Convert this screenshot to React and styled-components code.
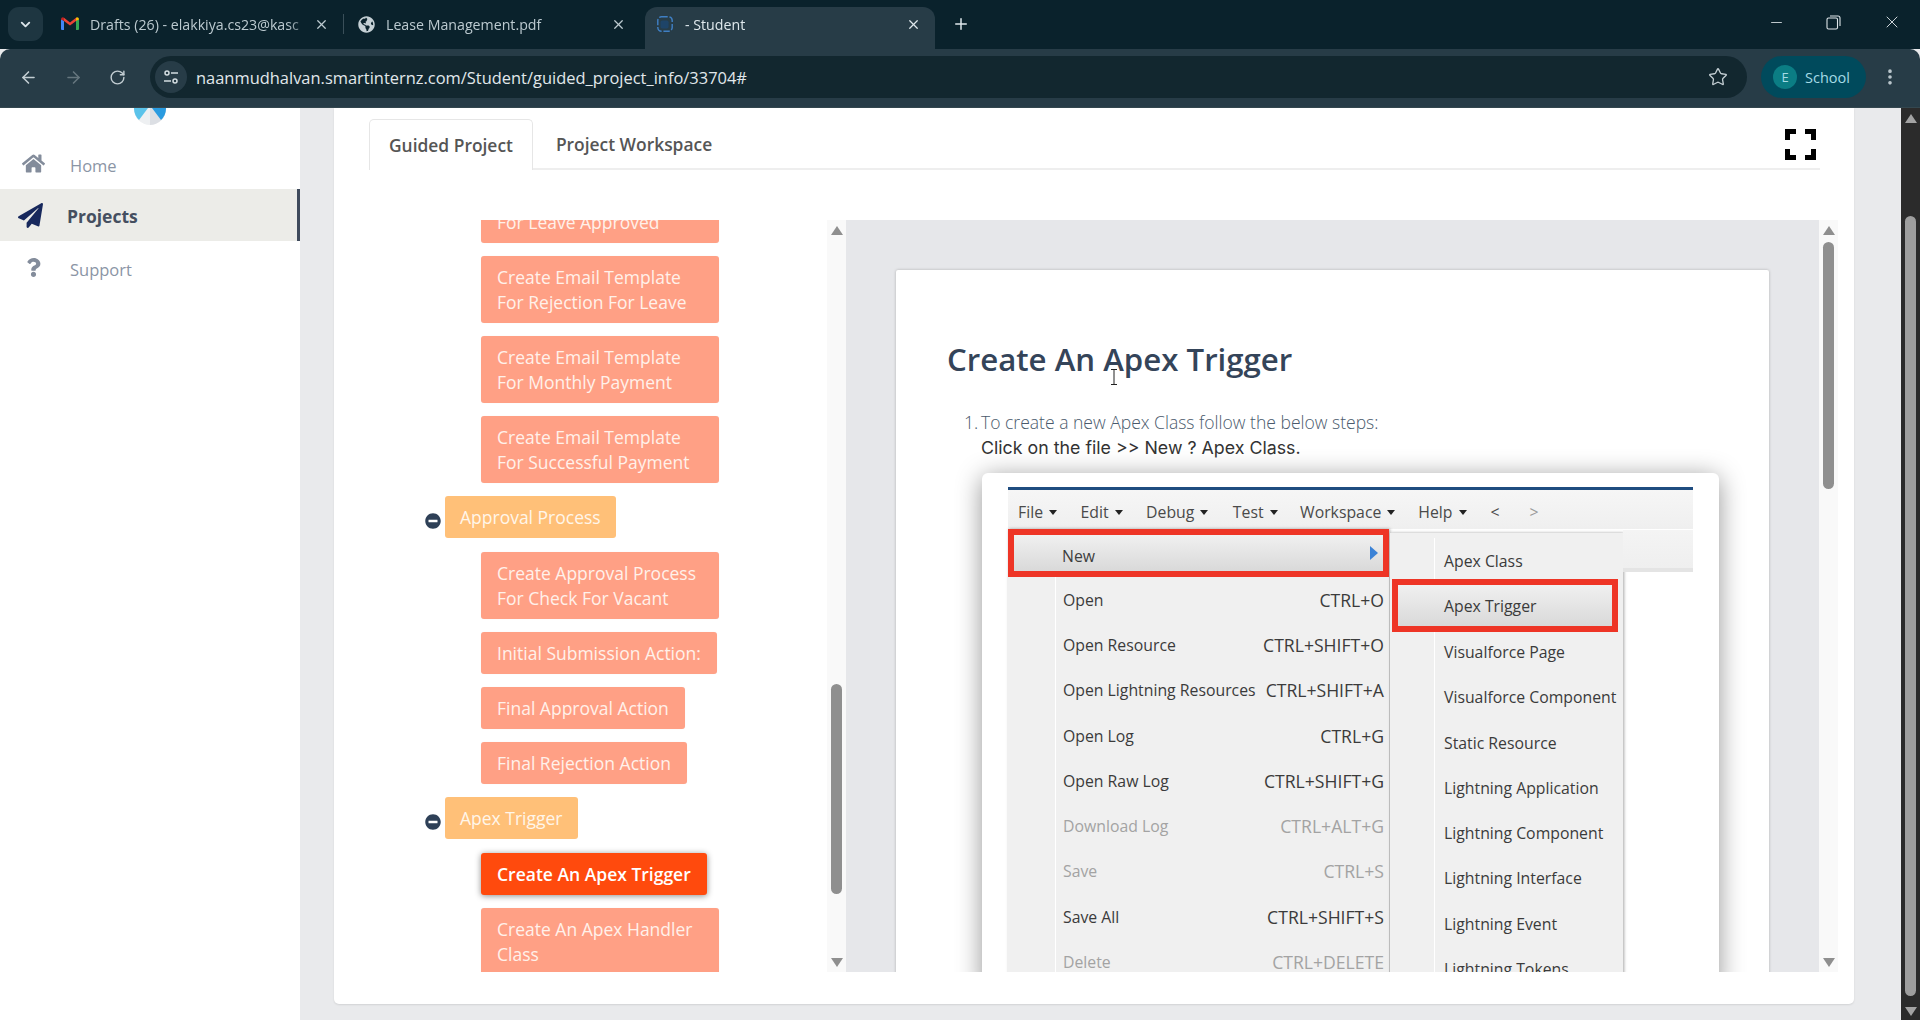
import React from "react";
import styled, { createGlobalStyle } from "styled-components";
import { ArrowLeft, ArrowRight, RotateCw, Star, Plus, X, Minus, ChevronDown, EllipsisVertical } from "lucide-react";
import { FaHome, FaPaperPlane, FaQuestion, FaMinusCircle, FaGlobeAmericas } from "react-icons/fa";

const Global = createGlobalStyle`
  html, body { margin: 0; padding: 0; height: 100%; overflow: hidden; background: #e9eaec; }
  * { box-sizing: border-box; }
  body { font-family: "Open Sans", "Noto Sans", sans-serif; }
`;

const Shell = styled.div`display: flex; flex-direction: column; width: 1920px; height: 1020px; overflow: hidden;`;

const TabStrip = styled.div`display: flex; align-items: flex-end; height: 49px; background: #0a222c; padding-left: 8px; color: #c6d2d8; font: 14.2px "Open Sans", sans-serif;`;
const TabSearch = styled.div`display: flex; align-items: center; justify-content: center; width: 35px; height: 34px; margin-bottom: 8px; border-radius: 11px; background: #1e3641; color: #dbe5ea;`;
const Tab = styled.div`
  display: flex; align-items: center; height: 42px; width: ${p => p.$w}px; margin-left: ${p => p.$ml || 0}px;
  padding: 0 14px 8px ${p => p.$pl || 18}px; border-radius: 12px 12px 0 0; white-space: nowrap;
  background: ${p => (p.$active ? "#273c47" : "transparent")}; color: ${p => (p.$active ? "#dfe8ec" : "#bccad0")};
`;
const TabFav = styled.span`display: flex; width: 18px; height: 18px; margin-right: 11px; flex: none; align-items: center; justify-content: center;`;
const TabTitle = styled.span`flex: 1; overflow: hidden; white-space: nowrap; -webkit-mask-image: linear-gradient(90deg, #000 88%, transparent);`;
const TabSep = styled.span`width: 1px; height: 20px; margin: 0 0 15px 0; background: #3a4f59;`;
const NewTab = styled.div`display: flex; align-items: center; height: 42px; padding-bottom: 8px; margin-left: 17px; color: #dfe8ec;`;
const WindowControls = styled.div`display: flex; align-items: center; margin-left: auto; height: 49px; padding: 0 18px 5px 0; gap: 41px; color: #dfe6ea;`;
const RestoreIcon = styled.svg`display: block;`;

const Toolbar = styled.div`display: flex; align-items: center; height: 59px; background: #273c47; border-radius: 10px 10px 0 0; padding: 0 0 2px 19px; color: #b9c6cc; border-bottom: 1px solid #34474f;`;
const NavButton = styled.span`display: flex; width: ${p => p.$w || 45}px; color: ${p => (p.$dim ? "#65767e" : "#c3ced3")};`;
const Omnibox = styled.div`display: flex; align-items: center; width: 1597px; height: 42px; margin-left: -9px; border-radius: 21px; background: #12272f; padding: 0 19px 0 5px; color: #e1e8eb; font: 16.45px "Open Sans", sans-serif;`;
const TuneBadge = styled.span`display: flex; align-items: center; justify-content: center; width: 32px; height: 32px; border-radius: 50%; background: #273c47; margin-right: 9px;`;
const Url = styled.span`flex: 1; white-space: nowrap;`;
const ProfilePill = styled.div`display: flex; align-items: center; height: 42px; width: 105px; margin-left: 14px; padding-left: 12px; border-radius: 21px; background: #004a5c; color: #a5dbe6; font: 14.5px "Open Sans", sans-serif;`;
const Avatar = styled.span`display: flex; align-items: center; justify-content: center; width: 24px; height: 24px; margin-right: 8px; border-radius: 50%; background: #0b7d84; font-size: 13px;`;
const MenuDots = styled.span`display: flex; margin-left: 14px; color: #bcc8ce;`;

const Viewport = styled.div`display: flex; flex: 1; min-height: 0;`;
const Sidebar = styled.nav`width: 300px; flex: none; background: #fff;`;
const LogoArc = styled.svg`display: block; margin: 0 auto 16px;`;
const NavItem = styled.div`
  display: flex; align-items: center; height: ${p => p.$h}px;
  background: ${p => (p.$active ? "#ecece8" : "transparent")};
  border-right: 3px solid ${p => (p.$active ? "#3f4a5c" : "transparent")};
  color: ${p => (p.$active ? "#454f60" : "#8b95a5")};
  font: ${p => (p.$active ? "700 17.5px" : "400 16.5px")} "Open Sans", sans-serif;
`;
const NavIcon = styled.span`display: flex; justify-content: center; width: ${p => p.$w}px; margin: 0 0 ${p => p.$mb || 0}px ${p => p.$ml}px; color: ${p => p.$c || "#838c9b"};`;
const NavLabel = styled.span`margin-left: ${p => p.$ml}px; padding: ${p => p.$pt || 0}px 0 ${p => p.$pb || 0}px;`;

const Main = styled.main`flex: 1; min-width: 0; padding-left: 34px; background: #e9eaec;`;
const Card = styled.section`width: 1520px; height: 896px; padding: 11px 34px 0 35px; background: #fff; border-radius: 0 0 5px 5px; box-shadow: 0 1px 2px rgba(0,0,0,.1);`;
const TabsRow = styled.div`display: flex; align-items: stretch; height: 51px; border-bottom: 2px solid #eeeeee;`;
const PageTab = styled.div`
  display: flex; align-items: center; padding: 0 ${p => (p.$active ? 19 : 22)}px; margin-bottom: ${p => (p.$active ? -2 : 0)}px; color: #555;
  font: 600 17.4px "Open Sans", sans-serif; background: #fff;
  border: 1px solid ${p => (p.$active ? "#e6e6e6" : "transparent")}; border-bottom: 0; border-radius: 5px 5px 0 0;
`;
const FullscreenBtn = styled.svg`display: block; margin: 10px 4px 0 auto;`;

const Body = styled.div`display: flex; height: 752px; margin-top: 50px;`;
const TreePanel = styled.div`display: flex; width: 477px; flex: none; height: 100%;`;
const TreeClip = styled.div`flex: 1; height: 100%; overflow: hidden;`;
const TreeList = styled.div`display: flex; flex-direction: column; margin-top: -57px;`;
const ParentRow = styled.div`display: flex; align-items: center; gap: 4px; padding-left: 56px; margin-top: 13px;`;
const MinusWrap = styled.span`display: flex; margin-top: 8px; color: #2e4057;`;
const Parent = styled.div`padding: 8.5px 15px; line-height: 25px; font-size: 17.5px; color: #fff6ea; background: #ffc078; border-radius: 3px;`;
const Child = styled.div`
  align-self: flex-start; max-width: 238px; margin: ${p => (p.$first ? 14 : 13)}px 0 0 112px; padding: 8.5px 16px; line-height: 25px; font-size: 17.5px; border-radius: 3px;
  color: ${p => (p.$current ? "#fff" : "#fff1ea")}; font-weight: ${p => (p.$current ? 600 : 400)};
  background: ${p => (p.$current ? "#ff4a0d" : "#ffa085")};
  min-width: ${p => (p.$wide ? "238px" : "0")};
  box-shadow: ${p => (p.$current ? "0 1px 6px rgba(0,0,0,.45)" : "0 0 1px rgba(0,0,0,.08)")};
`;

const Track = styled.div`display: flex; flex-direction: column; align-items: center; width: 19px; flex: none; height: 100%; padding: 6px 4px 5px; background: #f9f9f9;`;
const ArrowUp = styled.span`width: 0; height: 0; border: 6px solid transparent; border-top: 0; border-bottom: 9px solid ${p => p.$c || "#8f8f8f"}; flex: none;`;
const ArrowDown = styled.span`width: 0; height: 0; border: 6px solid transparent; border-bottom: 0; border-top: 9px solid ${p => p.$c || "#8f8f8f"}; flex: none;`;
const Thumb = styled.span`width: 100%; flex: none; height: ${p => p.$h}px; margin: ${p => p.$t}px 0 auto; border-radius: 6px; background: ${p => p.$c || "#8f8f8f"};`;

const DocPanel = styled.div`width: 973px; flex: none; height: 100%; overflow: hidden; padding: 50px 0 0 50px; background: #e6e7ea;`;
const DocPage = styled.article`position: relative; width: 873px; min-height: 800px; padding: 69px 0 0 51px; background: #fff; border-radius: 2px; box-shadow: 0 0 3px rgba(0,0,0,.25);`;
const DocTitle = styled.h1`margin: 0; font: 600 31.2px/40px "Open Sans", sans-serif; color: #344459;`;
const StepLine = styled.div`display: flex; margin: ${p => p.$mt}px 0 0 17px; height: 26px; line-height: 26px; font-size: 17.55px; font-weight: 300; color: #4a5a6c;`;
const StepNum = styled.span`width: 17px;`;
const StepSub = styled.div`margin-left: 34px; height: 26px; font: 400 17.8px/26px "Inter", "Lato", sans-serif; color: #333;`;
const Cursor = styled.svg`position: absolute; left: 214px; top: 99px;`;

const Figure = styled.div`width: 737px; height: 520px; margin: 12px 0 0 35px; padding: 14px 26px 0; background: #fff; border-radius: 6px; box-shadow: 0 4px 26px rgba(0,0,0,.42);`;
const AppFrame = styled.div`border-top: 3px solid #1f4d80; font: 15.8px "Open Sans", sans-serif; color: #3e3e3e;`;
const MenuBar = styled.div`display: flex; align-items: center; height: 39px; padding: 5px 0 0 10px; background: linear-gradient(#f6f6f6, #efefef);`;
const MenuTitle = styled.span`display: inline-flex; align-items: center; margin-right: ${p => p.$mr}px; color: ${p => p.$dim ? "#9a9a9a" : "#4a4a4a"};`;
const Caret = styled.span`width: 0; height: 0; margin-left: 6px; border: 4px solid transparent; border-bottom: 0; border-top: 5px solid #222;`;
const Menus = styled.div`display: flex; align-items: flex-start;`;
const FileMenu = styled.div`width: 381px; flex: none; background: #f0f0f0; box-shadow: 1px 0 3px rgba(0,0,0,.35);`;
const SubMenu = styled.div`width: 233px; flex: none; margin: 4px 0 0 1px; padding-top: 5px; background: #f0f0f0; box-shadow: 1px 0 3px rgba(0,0,0,.35);`;
const BackBand = styled.div`flex: 1; height: 42px; background: linear-gradient(#f4f4f4, #efefef); border-bottom: 4px solid #e4e4e4; margin-top: 1px;`;
const FileRow = styled.div`
  display: flex; align-items: center; justify-content: space-between; height: 45.3px; padding: 0 5px 0 7px; margin-left: 47px; border-left: 1px solid #fff;
  white-space: nowrap; color: ${p => (p.$off ? "#a3a3a3" : "#3b3b3b")};
`;
const Shortcut = styled.span`font-size: 17.6px;`;
const SubRow = styled.div`display: flex; align-items: center; height: 45.3px; margin-left: 44px; padding-left: 9px; border-left: 1px solid #fff; white-space: nowrap; color: #3b3b3b;`;
const RedNew = styled.div`display: flex; align-items: center; justify-content: space-between; height: 48px; padding: 5px 5px 0 48px; border: 6px solid #ee3526; background: linear-gradient(#f0f0f0, #d9d9d9);`;
const NewArrow = styled.span`width: 0; height: 0; margin-top: -6px; border: 7px solid transparent; border-right: 0; border-left: 8px solid #3b82d6;`;
const RedTrigger = styled.div`position: relative; z-index: 1; display: flex; align-items: center; height: 53px; margin: -4px 5px -3px 2px; padding-left: 46px; border: 6px solid #ee3526; background: linear-gradient(#f0f0f0, #d9d9d9); color: #3b3b3b;`;

const PageBar = styled.aside`display: flex; flex-direction: column; align-items: center; width: 19px; flex: none; padding: 6px 4px 4px; background: #2b2b2b;`;

const tree = [
  { t: "Create Email Template For Leave Approved", w: 1 },
  { t: "Create Email Template For Rejection For Leave", w: 1 },
  { t: "Create Email Template For Monthly Payment", w: 1 },
  { t: "Create Email Template For Successful Payment", w: 1 },
  { p: "Approval Process" },
  { t: "Create Approval Process For Check For Vacant", w: 1, first: 1 },
  { t: "Initial Submission Action:" },
  { t: "Final Approval Action" },
  { t: "Final Rejection Action" },
  { p: "Apex Trigger" },
  { t: "Create An Apex Trigger", cur: 1, first: 1 },
  { t: "Create An Apex Handler Class", w: 1 },
];
const fileRows = [
  ["Open", "CTRL+O"], ["Open Resource", "CTRL+SHIFT+O"], ["Open Lightning Resources", "CTRL+SHIFT+A"], ["Open Log", "CTRL+G"],
  ["Open Raw Log", "CTRL+SHIFT+G"], ["Download Log", "CTRL+ALT+G", 1], ["Save", "CTRL+S", 1], ["Save All", "CTRL+SHIFT+S"], ["Delete", "CTRL+DELETE", 1],
];
const subRows = ["Visualforce Page", "Visualforce Component", "Static Resource", "Lightning Application", "Lightning Component", "Lightning Interface", "Lightning Event", "Lightning Tokens"];
const menus = [["File", 23.5], ["Edit", 23.5], ["Debug", 24.5], ["Test", 22.5], ["Workspace", 23], ["Help", 24]];

const Gmail = () => (
  <svg width="18" height="14" viewBox="0 0 18 14">
    <path d="M0 13V2l3 2v9H1a1 1 0 0 1-1-1z" fill="#4285f4" />
    <path d="M18 13V2l-3 2v9h2a1 1 0 0 0 1-1z" fill="#34a853" />
    <path d="M3 4V.8L9 5.5 15 .8V4L9 8.5z" fill="#ea4335" />
    <path d="M0 2.4C0 .6 2 -.4 3 .8V4z" fill="#c5221f" />
    <path d="M18 2.4C18 .6 16 -.4 15 .8V4z" fill="#fbbc04" />
  </svg>
);
const StudentFav = () => (
  <svg width="20" height="20" viewBox="0 0 20 20" fill="none">
    <rect x="2" y="2" width="16" height="16" rx="4" stroke="#3f7fc4" strokeWidth="1.6" strokeDasharray="7 2" />
    <rect x="5" y="6" width="9" height="9" rx="2" fill="#1e4468" />
  </svg>
);

export default function App() {
  return (
    <Shell>
      <Global />
      <TabStrip>
        <TabSearch><ChevronDown size={15} strokeWidth={3} /></TabSearch>
        <Tab $w={300} $pl={18}>
          <TabFav><Gmail /></TabFav>
          <TabTitle>Drafts (26) - elakkiya.cs23@kasc</TabTitle>
          <X size={15} strokeWidth={2} />
        </Tab>
        <TabSep />
        <Tab $w={296} $pl={13}>
          <TabFav><FaGlobeAmericas size={17} color="#c5d0d5" /></TabFav>
          <TabTitle>Lease Management.pdf</TabTitle>
          <X size={15} strokeWidth={2} />
        </Tab>
        <Tab $w={290} $active $ml={5} $pl={11}>
          <TabFav><StudentFav /></TabFav>
          <TabTitle>- Student</TabTitle>
          <X size={15} strokeWidth={2} />
        </Tab>
        <NewTab><Plus size={18} strokeWidth={2} /></NewTab>
        <WindowControls>
          <Minus size={17} strokeWidth={1.2} />
          <RestoreIcon width="15" height="15" viewBox="0 0 15 15" fill="none" stroke="currentColor" strokeWidth="1.1">
            <rect x="1" y="3" width="10.5" height="11" rx="1.5" />
            <path d="M4 1h8a2 2 0 0 1 2 2v8" />
          </RestoreIcon>
          <X size={20} strokeWidth={1.1} />
        </WindowControls>
      </TabStrip>
      <Toolbar>
        <NavButton><ArrowLeft size={19} /></NavButton>
        <NavButton $dim><ArrowRight size={19} /></NavButton>
        <NavButton $w={50}><RotateCw size={17} /></NavButton>
        <Omnibox>
          <TuneBadge>
            <svg width="16" height="16" viewBox="0 0 16 16" fill="none" stroke="#d5dee2" strokeWidth="1.5">
              <circle cx="4" cy="4" r="2" /><path d="M8 4h7" />
              <circle cx="12" cy="12" r="2" /><path d="M1 12h7" />
            </svg>
          </TuneBadge>
          <Url>naanmudhalvan.smartinternz.com/Student/guided_project_info/33704#</Url>
          <Star size={20} strokeWidth={1.6} color="#c3ced3" />
        </Omnibox>
        <ProfilePill><Avatar>E</Avatar>School</ProfilePill>
        <MenuDots><EllipsisVertical size={20} strokeWidth={2.4} /></MenuDots>
      </Toolbar>
      <Viewport>
        <Sidebar>
          <LogoArc width="32" height="17" viewBox="0 0 32 17">
            <path d="M0 0h16v17A16 16 0 0 1 0 1z" fill="#eef0f2" />
            <path d="M32 0H16v17A16 16 0 0 0 32 1z" fill="#dcdfe4" />
            <path d="M0 0h14L5 12A16 16 0 0 1 0 1z" fill="#5bc3ea" />
            <path d="M32 0H18l9 12A16 16 0 0 0 32 1z" fill="#2a9be0" />
          </LogoArc>
          <NavItem $h={48}><NavIcon $w={24} $ml={21} $mb={4}><FaHome size={23} /></NavIcon><NavLabel $ml={25}>Home</NavLabel></NavItem>
          <NavItem $h={52} $active><NavIcon $w={28} $ml={16} $c="#17285c"><FaPaperPlane size={25} /></NavIcon><NavLabel $ml={23} $pt={2}>Projects</NavLabel></NavItem>
          <NavItem $h={58}><NavIcon $w={24} $ml={21} $mb={5}><FaQuestion size={19} /></NavIcon><NavLabel $ml={25} $pb={2}>Support</NavLabel></NavItem>
        </Sidebar>
        <Main>
          <Card>
            <TabsRow>
              <PageTab $active>Guided Project</PageTab>
              <PageTab>Project Workspace</PageTab>
              <FullscreenBtn width="31" height="31" viewBox="0 0 31 31" fill="none" stroke="#000" strokeWidth="5">
                <path d="M2.5 11V2.5H11M20 2.5h8.500V11M28.500 20v8.500H20M11 28.500H2.500V20" />
              </FullscreenBtn>
            </TabsRow>
            <Body>
              <TreePanel>
                <TreeClip>
                  <TreeList>
                    {tree.map((n, i) =>
                      n.p ? (
                        <ParentRow key={i}>
                          <MinusWrap><FaMinusCircle size={16} /></MinusWrap>
                          <Parent>{n.p}</Parent>
                        </ParentRow>
                      ) : (
                        <Child key={i} $wide={n.w} $current={n.cur} $first={n.first}>{n.t}</Child>
                      )
                    )}
                  </TreeList>
                </TreeClip>
                <Track>
                  <ArrowUp />
                  <Thumb $t={449} $h={210} />
                  <ArrowDown />
                </Track>
              </TreePanel>
              <DocPanel>
                <DocPage>
                  <DocTitle>Create An Apex Trigger</DocTitle>
                  <Cursor width="8" height="16" viewBox="0 0 8 16" fill="none" stroke="#222" strokeWidth="1">
                    <path d="M1 .5h6M4 .5v15M1 15.500h6" />
                  </Cursor>
                  <StepLine $mt={30}><StepNum>1.</StepNum>To create a new Apex Class follow the below steps:</StepLine>
                  <StepSub>Click on the file &gt;&gt; New ? Apex Class.</StepSub>
                  <Figure>
                    <AppFrame>
                      <MenuBar>
                        {menus.map(([m, mr]) => (
                          <MenuTitle key={m} $mr={mr}>{m}<Caret /></MenuTitle>
                        ))}
                        <MenuTitle $mr={30}>&lt;</MenuTitle>
                        <MenuTitle $dim $mr={0}>&gt;</MenuTitle>
                      </MenuBar>
                      <Menus>
                        <FileMenu>
                          <RedNew>New<NewArrow /></RedNew>
                          {fileRows.map(([a, b, off]) => (
                            <FileRow key={a} $off={off}><span>{a}</span><Shortcut>{b}</Shortcut></FileRow>
                          ))}
                        </FileMenu>
                        <SubMenu>
                          <SubRow>Apex Class</SubRow>
                          <RedTrigger>Apex Trigger</RedTrigger>
                          {subRows.map(s => <SubRow key={s}>{s}</SubRow>)}
                        </SubMenu>
                        <BackBand />
                      </Menus>
                    </AppFrame>
                  </Figure>
                </DocPage>
              </DocPanel>
              <Track>
                <ArrowUp />
                <Thumb $t={7} $h={247} />
                <ArrowDown />
              </Track>
            </Body>
          </Card>
        </Main>
        <PageBar>
          <ArrowUp $c="#a3a3a3" />
          <Thumb $t={93} $h={780} $c="#9e9e9e" />
          <ArrowDown $c="#a3a3a3" />
        </PageBar>
      </Viewport>
    </Shell>
  );
}
